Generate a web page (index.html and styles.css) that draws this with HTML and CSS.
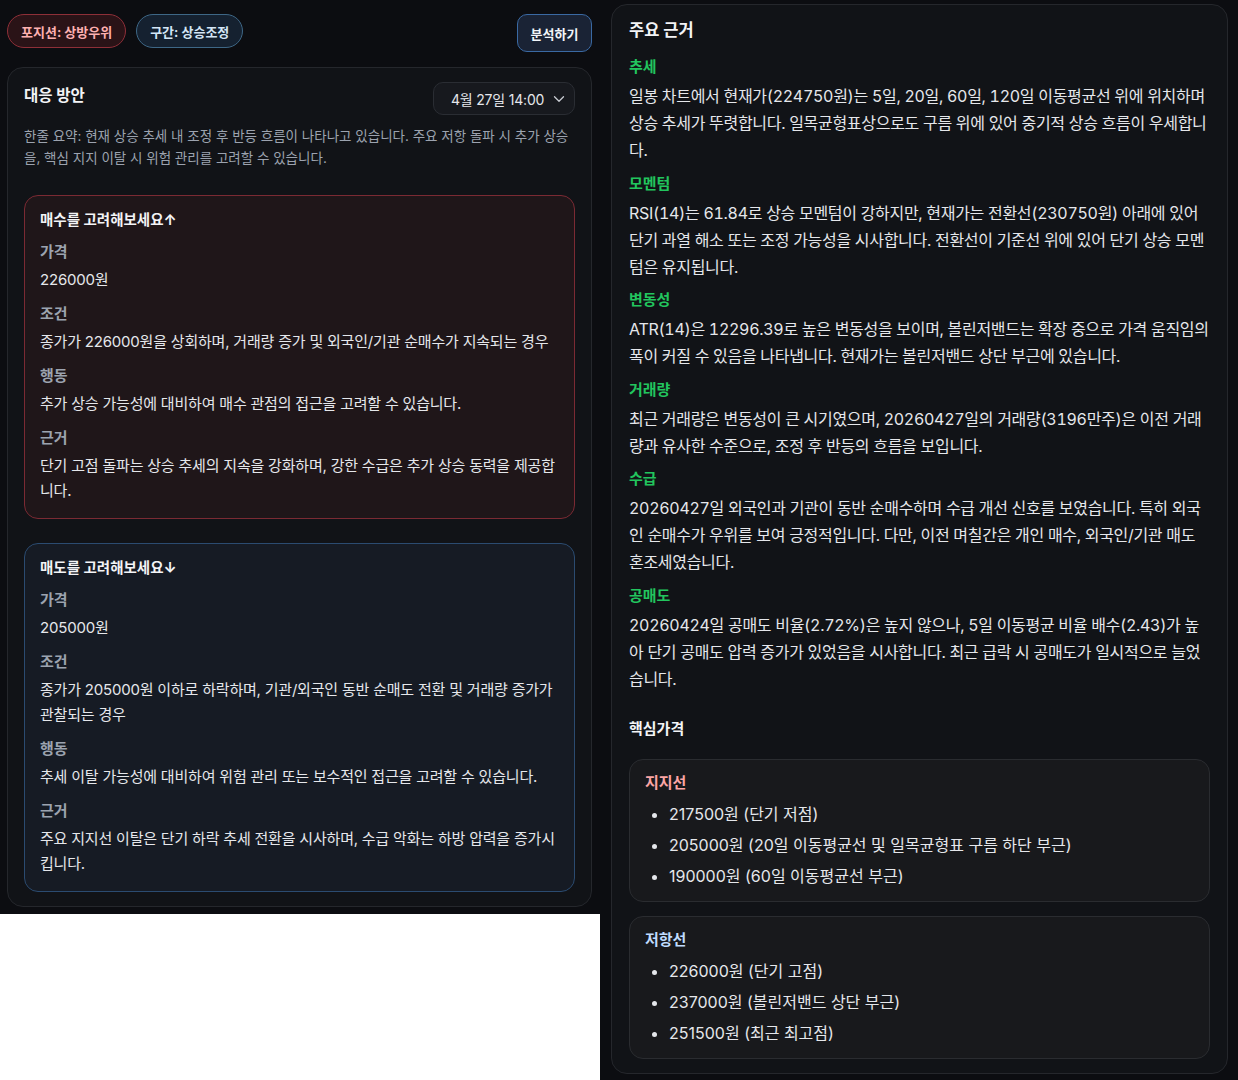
FILE: index.html
```html
<!DOCTYPE html>
<html lang="ko">
<head>
<meta charset="utf-8">
<title>분석</title>
<link rel="stylesheet" href="styles.css">
</head>
<body>
<div class="layout">
  <section class="left-col">
    <div class="top-bar">
      <div class="badges">
        <span class="badge badge-red">포지션: 상방우위</span>
        <span class="badge badge-blue">구간: 상승조정</span>
      </div>
      <button class="analyze-btn" type="button">분석하기</button>
    </div>
    <div class="panel plan-panel">
      <div class="plan-head">
        <h2 class="plan-title">대응 방안</h2>
        <div class="select">
          <span>4월 27일 14:00</span>
          <svg class="chev" width="12" height="8" viewBox="0 0 12 8"><path d="M1.5 1.8 6 6.2 10.5 1.8" fill="none" stroke="#c9ccd2" stroke-width="1.3" stroke-linecap="round" stroke-linejoin="round"/></svg>
        </div>
      </div>
      <p class="summary">한줄 요약: 현재 상승 추세 내 조정 후 반등 흐름이 나타나고 있습니다. 주요 저항 돌파 시 추가 상승을, 핵심 지지 이탈 시 위험 관리를 고려할 수 있습니다.</p>

      <div class="scenario scenario-buy">
        <div class="sc-title">매수를 고려해보세요↑</div>
        <div class="sc-label">가격</div>
        <div class="sc-value">226000원</div>
        <div class="sc-label">조건</div>
        <div class="sc-value">종가가 226000원을 상회하며, 거래량 증가 및 외국인/기관 순매수가 지속되는 경우</div>
        <div class="sc-label">행동</div>
        <div class="sc-value">추가 상승 가능성에 대비하여 매수 관점의 접근을 고려할 수 있습니다.</div>
        <div class="sc-label">근거</div>
        <div class="sc-value">단기 고점 돌파는 상승 추세의 지속을 강화하며, 강한 수급은 추가 상승 동력을 제공합니다.</div>
      </div>

      <div class="scenario scenario-sell">
        <div class="sc-title">매도를 고려해보세요↓</div>
        <div class="sc-label">가격</div>
        <div class="sc-value">205000원</div>
        <div class="sc-label">조건</div>
        <div class="sc-value">종가가 205000원 이하로 하락하며, 기관/외국인 동반 순매도 전환 및 거래량 증가가 관찰되는 경우</div>
        <div class="sc-label">행동</div>
        <div class="sc-value">추세 이탈 가능성에 대비하여 위험 관리 또는 보수적인 접근을 고려할 수 있습니다.</div>
        <div class="sc-label">근거</div>
        <div class="sc-value">주요 지지선 이탈은 단기 하락 추세 전환을 시사하며, 수급 악화는 하방 압력을 증가시킵니다.</div>
      </div>
    </div>
  </section>

  <section class="right-col">
    <div class="panel reason-panel">
      <h2 class="reason-title">주요 근거</h2>

      <h3 class="r-head">추세</h3>
      <p class="r-text">일봉 차트에서 현재가(224750원)는 5일, 20일, 60일, 120일 이동평균선 위에 위치하며 상승 추세가 뚜렷합니다. 일목균형표상으로도 구름 위에 있어 중기적 상승 흐름이 우세합니다.</p>

      <h3 class="r-head">모멘텀</h3>
      <p class="r-text">RSI(14)는 61.84로 상승 모멘텀이 강하지만, 현재가는 전환선(230750원) 아래에 있어 단기 과열 해소 또는 조정 가능성을 시사합니다. 전환선이 기준선 위에 있어 단기 상승 모멘텀은 유지됩니다.</p>

      <h3 class="r-head">변동성</h3>
      <p class="r-text">ATR(14)은 12296.39로 높은 변동성을 보이며, 볼린저밴드는 확장 중으로 가격 움직임의 폭이 커질 수 있음을 나타냅니다. 현재가는 볼린저밴드 상단 부근에 있습니다.</p>

      <h3 class="r-head">거래량</h3>
      <p class="r-text">최근 거래량은 변동성이 큰 시기였으며, 20260427일의 거래량(3196만주)은 이전 거래량과 유사한 수준으로, 조정 후 반등의 흐름을 보입니다.</p>

      <h3 class="r-head">수급</h3>
      <p class="r-text">20260427일 외국인과 기관이 동반 순매수하며 수급 개선 신호를 보였습니다. 특히 외국인 순매수가 우위를 보여 긍정적입니다. 다만, 이전 며칠간은 개인 매수, 외국인/기관 매도 혼조세였습니다.</p>

      <h3 class="r-head">공매도</h3>
      <p class="r-text">20260424일 공매도 비율(2.72%)은 높지 않으나, 5일 이동평균 비율 배수(2.43)가 높아 단기 공매도 압력 증가가 있었음을 시사합니다. 최근 급락 시 공매도가 일시적으로 늘었습니다.</p>

      <h3 class="key-title">핵심가격</h3>

      <div class="level-card">
        <div class="level-title level-support">지지선</div>
        <ul class="level-list">
          <li>217500원 (단기 저점)</li>
          <li>205000원 (20일 이동평균선 및 일목균형표 구름 하단 부근)</li>
          <li>190000원 (60일 이동평균선 부근)</li>
        </ul>
      </div>

      <div class="level-card">
        <div class="level-title level-resist">저항선</div>
        <ul class="level-list">
          <li>226000원 (단기 고점)</li>
          <li>237000원 (볼린저밴드 상단 부근)</li>
          <li>251500원 (최근 최고점)</li>
        </ul>
      </div>
    </div>
  </section>
</div>
</body>
</html>
```

FILE: styles.css
```css
* { box-sizing: border-box; }

html, body {
  margin: 0;
  padding: 0;
  background: #ffffff;
}

body {
  font-family: Inter, "Noto Sans CJK KR", sans-serif;
  color: #e5e7eb;
}

h2, h3, p, ul { margin: 0; }

.layout {
  display: flex;
  align-items: flex-start;
  width: 1238px;
}

.left-col {
  width: 600px;
  flex: none;
  background: #0c0d11;
  padding: 14px 8px 7px 7px;
}

.right-col {
  flex: 1;
  min-height: 1080px;
  background: #0c0d11;
  padding: 4px 10px 4px 11px;
}

.top-bar {
  display: flex;
  justify-content: space-between;
  align-items: flex-start;
  margin-bottom: 15px;
}

.badges {
  display: flex;
  gap: 10px;
}

.badge {
  display: inline-flex;
  align-items: center;
  height: 34px;
  padding: 0 13px;
  border-radius: 999px;
  font-size: 13px;
  font-weight: 700;
  border: 1px solid;
}

.badge-red {
  background: #2a1317;
  border-color: #8e2f38;
  color: #fdb0b0;
}

.badge-blue {
  background: #152130;
  border-color: #3e6786;
  color: #d4e6f6;
}

.analyze-btn {
  height: 38px;
  width: 75px;
  padding: 0;
  border-radius: 10px;
  border: 1px solid #3a69a3;
  background: #1a2335;
  color: #f1f5f9;
  font-family: inherit;
  font-size: 13px;
  font-weight: 700;
}

.panel {
  background: #111317;
  border: 1px solid #25272c;
  border-radius: 16px;
}

.plan-panel {
  padding: 14px 16px 14px 16px;
}

.plan-head {
  display: flex;
  justify-content: space-between;
  align-items: center;
}

.plan-title {
  font-size: 15.5px;
  font-weight: 700;
  color: #f3f4f6;
  margin-top: -9px;
}

.select {
  width: 142px;
  height: 33px;
  display: flex;
  align-items: center;
  justify-content: space-between;
  padding: 0 9px 0 17px;
  background: #17191e;
  border: 1px solid #2a2d33;
  border-radius: 10px;
  font-size: 14px;
  letter-spacing: -0.2px;
  color: #e5e7eb;
}

.chev { display: block; }

.summary {
  margin-top: 10px;
  font-size: 13.5px;
  line-height: 22px;
  color: #9ca3af;
}

.scenario {
  border: 1px solid;
  border-radius: 14px;
  padding: 14px 15px 15px 15px;
  margin-top: 26px;
}

.scenario + .scenario { margin-top: 24px; }

.scenario-buy {
  background: #1f1619;
  border-color: #7b2a33;
}

.scenario-sell {
  background: #161b24;
  border-color: #2b4b70;
}

.sc-title {
  font-size: 14.5px;
  font-weight: 700;
  line-height: 20px;
  color: #f3f4f6;
}

.sc-label {
  font-size: 15px;
  font-weight: 700;
  line-height: 22px;
  color: #9ca3af;
  margin-top: 11px;
}

.sc-value {
  font-size: 15px;
  line-height: 25px;
  letter-spacing: -0.2px;
  color: #e5e7eb;
  margin-top: 4px;
}

.sc-value + .sc-label { margin-top: 11px; }

.reason-panel {
  padding: 13px 17px 14px 17px;
}

.reason-title {
  font-size: 16.5px;
  font-weight: 700;
  line-height: 24px;
  color: #f3f4f6;
}

.r-head {
  font-size: 15px;
  font-weight: 700;
  line-height: 22px;
  color: #22c55e;
  margin-top: 8.5px;
}

.reason-title + .r-head { margin-top: 14px; }

.r-text {
  font-size: 16px;
  line-height: 27px;
  letter-spacing: -0.3px;
  font-variant-numeric: tabular-nums;
  color: #e5e7eb;
  margin-top: 5px;
}

.key-title {
  font-size: 15px;
  font-weight: 700;
  line-height: 22px;
  color: #f3f4f6;
  margin-top: 25px;
  margin-bottom: 19px;
}

.level-card {
  background: #18191c;
  border: 1px solid #2a2c30;
  border-radius: 14px;
  padding: 12px 15px 11px 15px;
}

.level-card + .level-card { margin-top: 14px; }

.level-title {
  font-size: 15px;
  font-weight: 700;
  line-height: 22px;
}

.level-support { color: #fca5a5; }
.level-resist { color: #bfdbfe; }

.level-list {
  list-style: disc;
  padding-left: 24px;
  margin-top: 7px;
}

.level-list li {
  font-size: 16px;
  line-height: 27px;
  color: #e5e7eb;
  margin-top: 4px;
}
```
